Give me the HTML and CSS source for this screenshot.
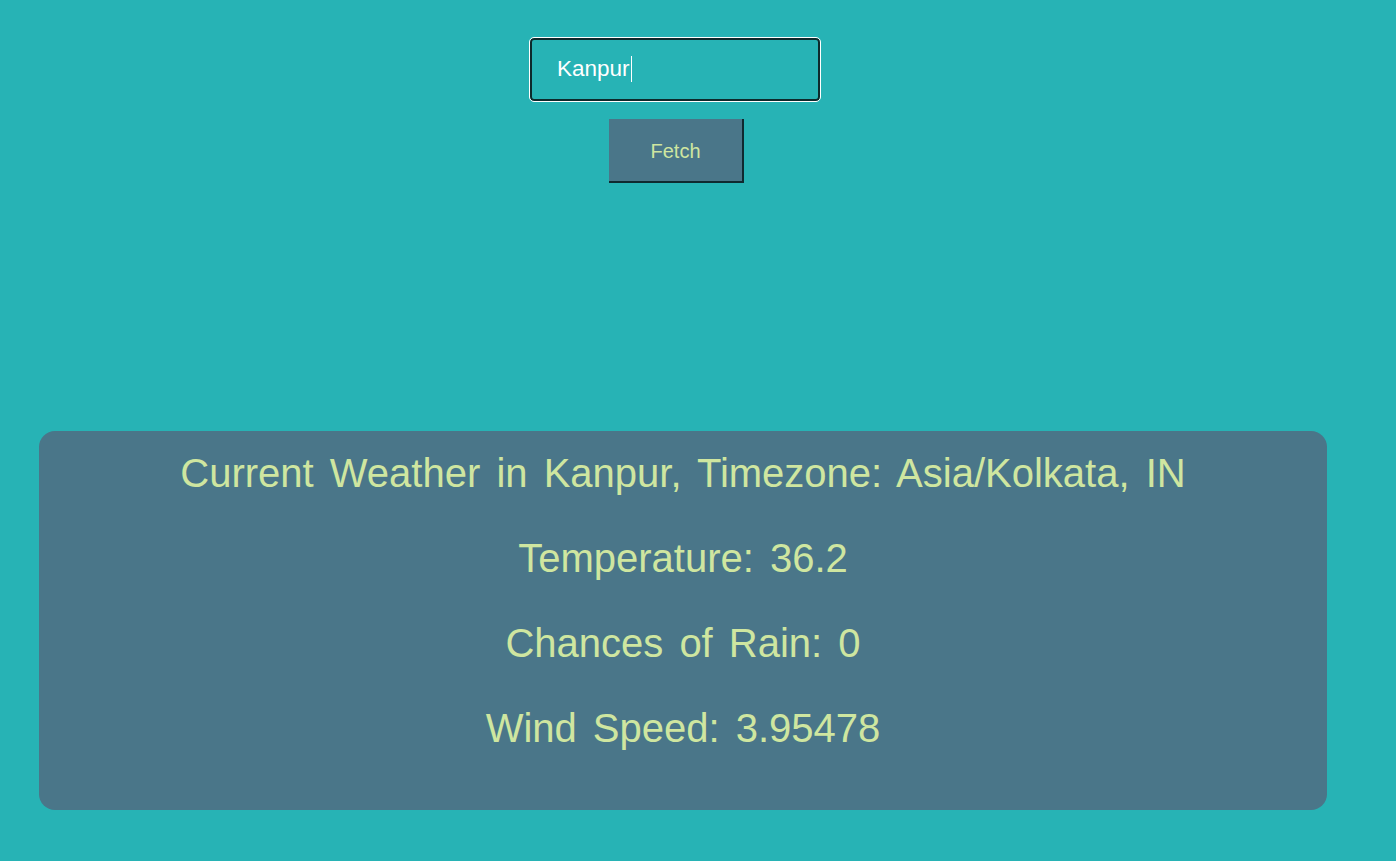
FILE: index.html
```html
<!DOCTYPE html>
<html>
<head>
<meta charset="utf-8">
<link rel="stylesheet" href="styles.css">
</head>
<body>
  <div class="search">
    <div class="city"><span class="city-text">Kanpur</span><span class="caret"></span></div>
    <button class="fetch">Fetch</button>
  </div>
  <div class="card">
    <p class="line">Current Weather in Kanpur, Timezone: Asia/Kolkata, IN</p>
    <p class="line">Temperature: 36.2</p>
    <p class="line">Chances of Rain: 0</p>
    <p class="line">Wind Speed: 3.95478</p>
  </div>
</body>
</html>
```
FILE: styles.css
```css
html, body {
  margin: 0;
  padding: 0;
  background: #27b3b5;
  font-family: "Liberation Sans", Arial, sans-serif;
}
body {
  height: 861px;
  overflow: hidden;
}
.search {
  width: 1350px;
  display: flex;
  flex-direction: column;
  align-items: center;
  padding-top: 38px;
}
.city {
  box-sizing: border-box;
  width: 290px;
  height: 63px;
  background: #27b3b5;
  border: 2px solid #0d2a2c;
  border-radius: 4px;
  outline: 1px solid #ffffff;
  display: flex;
  align-items: center;
  padding: 0 0 1px 25px;
  color: #ffffff;
  font-size: 22.5px;
}
.caret {
  display: inline-block;
  width: 1px;
  height: 26px;
  background: #ffffff;
  margin-left: 1px;
}
.fetch {
  box-sizing: border-box;
  margin: 18px 0 0 3px;
  width: 135px;
  height: 64px;
  background: #4a7689;
  border: none;
  border-right: 2px solid #0f2a30;
  border-bottom: 2px solid #0f2a30;
  color: #cfe6a0;
  font-family: "Liberation Sans", Arial, sans-serif;
  font-size: 20px;
  padding: 2px 0 0 0;
}
.card {
  box-sizing: border-box;
  margin: 248px 0 0 39px;
  width: 1288px;
  height: 379px;
  background: #4a7689;
  border-radius: 16px;
  padding-top: 20px;
  text-align: center;
}
.line {
  margin: 0 0 41px 0;
  color: #cfe6a0;
  font-size: 40px;
  line-height: 44px;
  word-spacing: 5px;
}
```
